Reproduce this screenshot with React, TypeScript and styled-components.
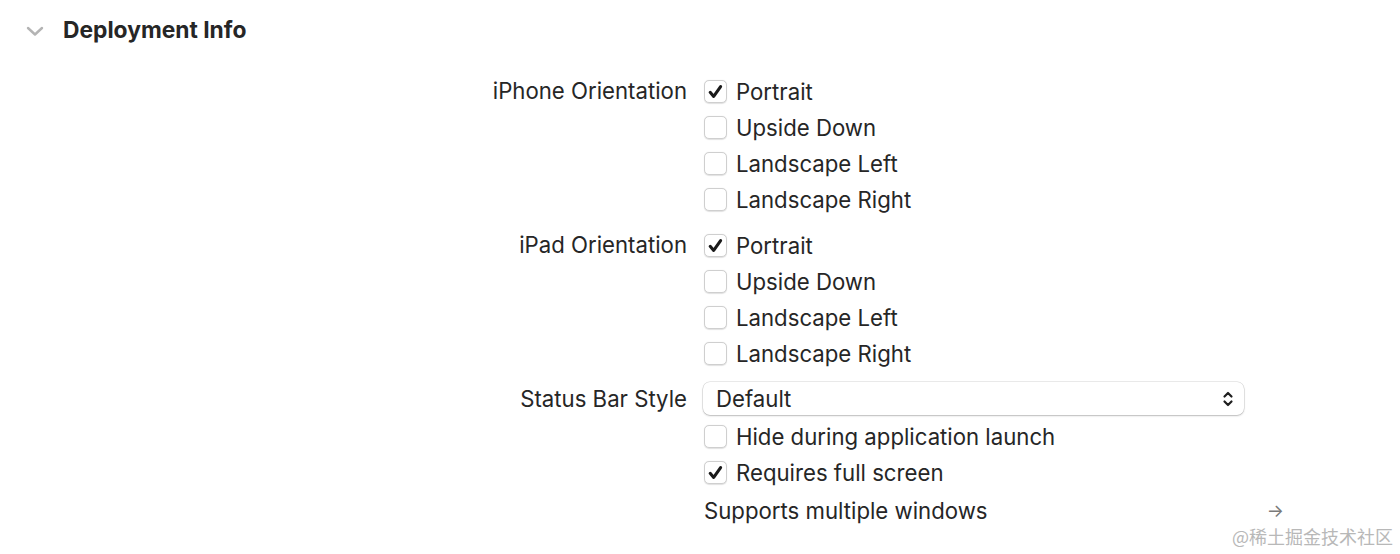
import styled, { createGlobalStyle } from 'styled-components';

const GlobalStyle = createGlobalStyle`
  body {
    margin: 0;
    background: #ffffff;
    font-family: Inter, "Liberation Sans", sans-serif;
    color: #262626;
  }
`;

type Option = { label: string; checked?: boolean };

const ORIENTATIONS: Option[] = [
  { label: 'Portrait', checked: true },
  { label: 'Upside Down' },
  { label: 'Landscape Left' },
  { label: 'Landscape Right' },
];

const CheckIcon = () => (
  <svg width="17" height="17" viewBox="0 0 16 16" fill="none">
    <path
      d="M3 8.8 L6.3 12.6 L12.8 3.4"
      stroke="#1a1a1a"
      strokeWidth="2.9"
      strokeLinecap="round"
      strokeLinejoin="round"
    />
  </svg>
);

const Checkbox = ({ label, checked }: Option) => (
  <CheckRow>
    <Box>{checked && <CheckIcon />}</Box>
    <span>{label}</span>
  </CheckRow>
);

const App = () => {
  return (
    <Page>
      <GlobalStyle />
      <SectionHeader>
        <svg width="18" height="12" viewBox="0 0 18 12" fill="none">
          <path
            d="M2 3 L9 9.5 L16 3"
            stroke="#b4b4b4"
            strokeWidth="2.4"
            strokeLinecap="round"
            strokeLinejoin="round"
          />
        </svg>
        <SectionTitle>Deployment Info</SectionTitle>
      </SectionHeader>

      <Form>
        <Label>iPhone Orientation</Label>
        <Group>
          {ORIENTATIONS.map((o) => (
            <Checkbox key={o.label} {...o} />
          ))}
        </Group>

        <Label>iPad Orientation</Label>
        <Group>
          {ORIENTATIONS.map((o) => (
            <Checkbox key={o.label} {...o} />
          ))}
        </Group>

        <Label $tall>Status Bar Style</Label>
        <Group>
          <Select>
            <span>Default</span>
            <svg width="12" height="18" viewBox="0 0 12 18" fill="none">
              <path
                d="M2.5 6.5 L6 3 L9.5 6.5 M2.5 11.5 L6 15 L9.5 11.5"
                stroke="#1f1f1f"
                strokeWidth="2.2"
                strokeLinecap="round"
                strokeLinejoin="round"
              />
            </svg>
          </Select>
          <Spacer />
          <Checkbox label="Hide during application launch" />
          <Checkbox label="Requires full screen" checked />
          <LinkRow>
            <span>Supports multiple windows</span>
            <Arrow>→</Arrow>
          </LinkRow>
        </Group>
      </Form>
      <Watermark>@稀土掘金技术社区</Watermark>
    </Page>
  );
};

const Page = styled.div`
  position: relative;
  width: 1400px;
  height: 554px;
  overflow: hidden;
`;

const SectionHeader = styled.div`
  display: flex;
  align-items: center;
  gap: 19px;
  height: 59px;
  padding-left: 26px;

  svg {
    margin-top: 2px;
  }
`;

const SectionTitle = styled.h2`
  margin: 0;
  font-size: 22.8px;
  font-weight: 700;
  color: #262626;
`;

const Form = styled.div`
  display: grid;
  grid-template-columns: 687px 540px;
  column-gap: 17px;
  row-gap: 10px;
  padding-top: 14px;
`;

const Label = styled.div<{ $tall?: boolean }>`
  height: ${({ $tall }) => ($tall ? '35px' : '36px')};
  line-height: ${({ $tall }) => ($tall ? '35px' : '36px')};
  text-align: right;
  font-size: 22.2px;
  color: #262626;
`;

const Group = styled.div`
  display: flex;
  flex-direction: column;
`;

const CheckRow = styled.div`
  display: flex;
  align-items: center;
  gap: 9px;
  height: 36px;
  font-size: 22.2px;
  color: #262626;
`;

const Box = styled.div`
  display: flex;
  align-items: center;
  justify-content: center;
  width: 21px;
  height: 21px;
  border: 1px solid #cfcfcf;
  border-radius: 5px;
  background: #ffffff;
  box-shadow: 0 0.5px 1px rgba(0, 0, 0, 0.12);
`;

const Select = styled.div`
  display: flex;
  align-items: center;
  justify-content: space-between;
  box-sizing: border-box;
  width: 541px;
  height: 33px;
  margin: 1px 0 0 -1px;
  padding: 0 10px 0 13px;
  border-radius: 7px;
  background: #ffffff;
  box-shadow: 0 0 0 0.5px rgba(0, 0, 0, 0.16), 0 1px 2px rgba(0, 0, 0, 0.2);
  font-size: 22.2px;
  color: #262626;
`;

const Spacer = styled.div`
  height: 3px;
`;

const LinkRow = styled.div`
  display: flex;
  align-items: center;
  justify-content: space-between;
  height: 36px;
  margin-top: 2px;
  font-size: 22.2px;
  color: #262626;
`;

const Arrow = styled.span`
  margin-right: -40px;
  font-size: 18px;
  color: #7a7a7a;
`;

const Watermark = styled.div`
  position: absolute;
  right: 7px;
  bottom: 5px;
  font-family: "Noto Sans CJK SC", sans-serif;
  font-size: 18px;
  color: #b8b8b8;
`;

export default App;
